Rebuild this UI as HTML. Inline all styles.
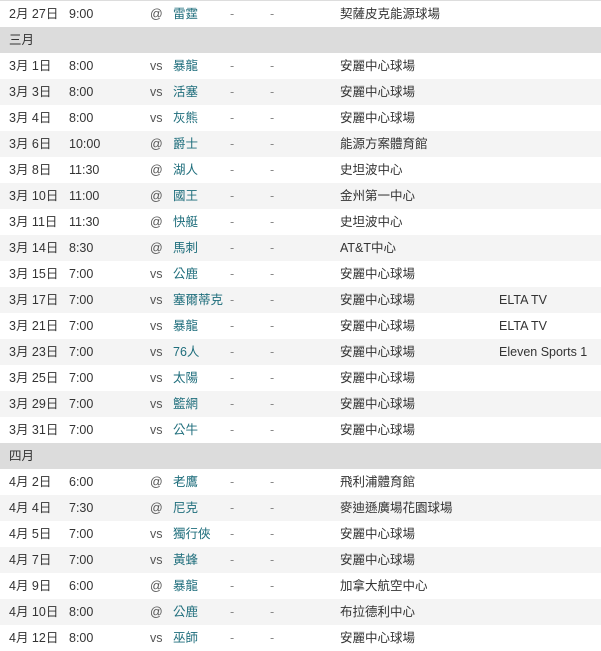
<!DOCTYPE html>
<html><head><meta charset="utf-8"><style>
body{margin:0;width:601px;height:647px;overflow:hidden;background:#fff;font-family:"Liberation Sans","Noto Sans CJK TC",sans-serif;font-size:12.5px;color:#333}
.t{border-top:1px solid #ddd}
.r{position:relative;height:26px;line-height:26px}
.g{background:#f4f4f4}
.h{background:#dcdcdc;height:26px;line-height:26px;padding-left:9px}
.r span{position:absolute;top:0;white-space:nowrap}
.a{left:9px}.b{left:69px}.c{left:150px;color:#555}.d{left:173px;color:#1f6e7c}.e{left:230px;color:#888}.f{left:270px;color:#888}.v{left:340px}.w{left:499px}
</style></head><body><div class="t"></div>
<div id="x"></div>
<script>
var rows=[
["2月 27日","9:00","@","雷霆","契薩皮克能源球場",""],
"三月",
["3月 1日","8:00","vs","暴龍","安麗中心球場",""],
["3月 3日","8:00","vs","活塞","安麗中心球場",""],
["3月 4日","8:00","vs","灰熊","安麗中心球場",""],
["3月 6日","10:00","@","爵士","能源方案體育館",""],
["3月 8日","11:30","@","湖人","史坦波中心",""],
["3月 10日","11:00","@","國王","金州第一中心",""],
["3月 11日","11:30","@","快艇","史坦波中心",""],
["3月 14日","8:30","@","馬刺","AT&amp;T中心",""],
["3月 15日","7:00","vs","公鹿","安麗中心球場",""],
["3月 17日","7:00","vs","塞爾蒂克","安麗中心球場","ELTA TV"],
["3月 21日","7:00","vs","暴龍","安麗中心球場","ELTA TV"],
["3月 23日","7:00","vs","76人","安麗中心球場","Eleven Sports 1"],
["3月 25日","7:00","vs","太陽","安麗中心球場",""],
["3月 29日","7:00","vs","籃網","安麗中心球場",""],
["3月 31日","7:00","vs","公牛","安麗中心球場",""],
"四月",
["4月 2日","6:00","@","老鷹","飛利浦體育館",""],
["4月 4日","7:30","@","尼克","麥迪遜廣場花園球場",""],
["4月 5日","7:00","vs","獨行俠","安麗中心球場",""],
["4月 7日","7:00","vs","黃蜂","安麗中心球場",""],
["4月 9日","6:00","@","暴龍","加拿大航空中心",""],
["4月 10日","8:00","@","公鹿","布拉德利中心",""],
["4月 12日","8:00","vs","巫師","安麗中心球場",""]];
var h="",i=0;
rows.forEach(function(r){if(typeof r=="string"){h+='<div class="h">'+r+'</div>';i=0;return;}
h+='<div class="r'+(i%2?' g':'')+'"><span class="a">'+r[0]+'</span><span class="b">'+r[1]+'</span><span class="c">'+r[2]+'</span><span class="d">'+r[3]+'</span><span class="e">-</span><span class="f">-</span><span class="v">'+r[4]+'</span><span class="w">'+r[5]+'</span></div>';i++;});
document.getElementById("x").innerHTML=h;
</script>
</body></html>
